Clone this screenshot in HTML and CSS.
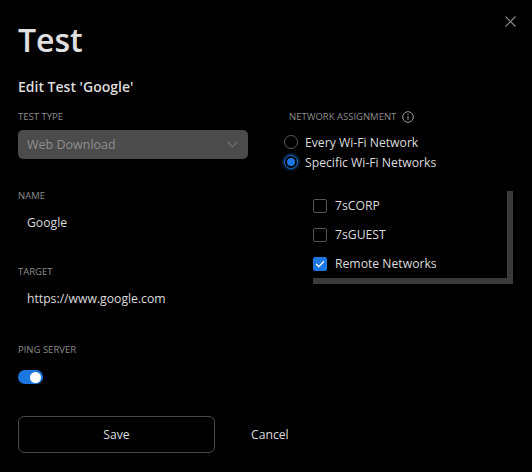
FILE: index.html
```html
<!DOCTYPE html>
<html>

<head>
	<title>Edit Test</title>
	<meta charset="utf-8" />
	<link rel="stylesheet" href="styles.css">
</head>

<body>
	<div class="dialog">
		<button type="button" class="close" aria-label="Close">
			<svg width="11" height="11" viewBox="0 0 11 11"><path d="M0.5 0.5 L10.5 10.5 M10.5 0.5 L0.5 10.5" stroke="#8a8a8a" stroke-width="1.2" fill="none" /></svg>
		</button>
		<h1>Test</h1>
		<h2>Edit Test 'Google'</h2>
		<form class="columns">
			<div class="col-left">
				<p class="label">Test type</p>
				<div class="select">
					<span>Web Download</span>
					<svg width="11" height="7" viewBox="0 0 11 7"><path d="M0.5 0.8 L5.5 5.8 L10.5 0.8" stroke="#777" stroke-width="1.1" fill="none" /></svg>
				</div>
				<p class="label name-label">Name</p>
				<input type="text" class="field" value="Google">
				<p class="label target-label">Target</p>
				<input type="text" class="field" value="https://www.google.com">
				<p class="label ping-label">Ping server</p>
				<span class="toggle"><span class="knob"></span></span>
			</div>
			<div class="col-right">
				<p class="label net-label">Network assignment
					<svg class="info" width="12" height="12" viewBox="0 0 12 12"><circle cx="6" cy="6" r="5.3" stroke="#9a9a9a" stroke-width="1" fill="none" /><path d="M6 5 V9" stroke="#9a9a9a" stroke-width="1" /><circle cx="6" cy="3.4" r="0.6" fill="#9a9a9a" /></svg>
				</p>
				<label class="radio"><span class="dot"></span> Every Wi-Fi Network</label>
				<label class="radio checked"><span class="dot"></span> Specific Wi-Fi Networks</label>
				<div class="networks">
					<label class="check"><span class="box"></span> 7sCORP</label>
					<label class="check"><span class="box"></span> 7sGUEST</label>
					<label class="check checked"><span class="box"><svg width="10" height="8" viewBox="0 0 10 8"><path d="M1 4 L3.8 6.6 L9 1.2" stroke="#fff" stroke-width="1.3" fill="none" /></svg></span> Remote Networks</label>
				</div>
			</div>
		</form>
		<div class="actions">
			<button type="button" class="btn-save">Save</button>
			<button type="button" class="btn-cancel">Cancel</button>
		</div>
	</div>
</body>

</html>
```

FILE: styles.css
```css
/* general styles */
* {
	box-sizing: border-box;
}

body {
	margin: 0;
	background-color: #000;
	font-family: "Open Sans", "Noto Sans", Arial, sans-serif;
	font-size: 12.2px;
	color: #dcdcdc;
}

.dialog {
	position: relative;
	width: 532px;
	height: 472px;
	padding: 18px 18px 0 18px;
}

.close {
	position: absolute;
	top: 15px;
	right: 16px;
	padding: 0;
	border: 0;
	background: none;
	cursor: pointer;
}

h1 {
	margin: 0;
	font-size: 32px;
	font-weight: 600;
	line-height: 44px;
	color: #e0e0e0;
}

h2 {
	margin: 15px 0 0 0;
	font-size: 14px;
	font-weight: 600;
	line-height: 20px;
	color: #dcdcdc;
}

.label {
	margin: 0;
	font-size: 9.5px;
	line-height: 14px;
	text-transform: uppercase;
	color: #8c8c8c;
}

/* columns */
.columns {
	display: grid;
	grid-template-columns: 230px 1fr;
	column-gap: 36px;
	margin-top: 13px;
}

.select {
	display: flex;
	align-items: center;
	justify-content: space-between;
	height: 29px;
	margin-top: 6px;
	padding: 0 10px 0 9px;
	border-radius: 5px;
	background-color: #4b4b4b;
	color: #8e8e8e;
	font-size: 12.5px;
}

.field {
	display: block;
	width: 100%;
	height: 20px;
	margin-top: 9px;
	padding: 0 0 0 9px;
	border: 0;
	background: none;
	font-family: inherit;
	font-size: 12.2px;
	color: #dcdcdc;
}

.name-label {
	margin-top: 30px;
}

.target-label {
	margin-top: 33px;
}

.ping-label {
	margin-top: 35px;
}

.toggle {
	display: flex;
	justify-content: flex-end;
	align-items: center;
	width: 25px;
	height: 14px;
	margin-top: 13px;
	padding: 0 2px;
	border-radius: 7px;
	background-color: #1c78e0;
}

.knob {
	width: 11px;
	height: 11px;
	border-radius: 50%;
	background-color: #fff;
}

/* network assignment */
.net-label {
	display: flex;
	align-items: center;
	gap: 6px;
	margin-left: 5px;
}

.radio {
	display: flex;
	align-items: center;
	gap: 7px;
	height: 20px;
}

.net-label + .radio {
	margin-top: 8px;
}

.radio .dot {
	display: flex;
	justify-content: center;
	align-items: center;
	width: 14px;
	height: 14px;
	border: 1px solid #5a5a5a;
	border-radius: 50%;
}

.radio.checked .dot {
	border-color: #1c78e0;
	box-shadow: 0 0 0 2px rgba(28, 120, 224, 0.25);
}

.radio.checked .dot::after {
	content: "";
	width: 8px;
	height: 8px;
	border-radius: 50%;
	background-color: #1c78e0;
}

.networks {
	width: 200px;
	margin: 19px 0 0 29px;
	border-right: 6px solid #3a3a3a;
	border-bottom: 6px solid #3a3a3a;
}

.check {
	display: flex;
	align-items: center;
	gap: 8px;
	height: 29px;
}

.check .box {
	display: flex;
	justify-content: center;
	align-items: center;
	width: 14px;
	height: 14px;
	border: 1px solid #555;
	border-radius: 2px;
}

.check.checked .box {
	border-color: #1c78e0;
	background-color: #1c78e0;
}

/* buttons */
.actions {
	display: flex;
	align-items: center;
	margin-top: 32px;
}

.actions button {
	font-family: inherit;
	font-size: 12.2px;
	color: #dcdcdc;
	background: none;
	cursor: pointer;
}

.btn-save {
	width: 197px;
	height: 37px;
	border: 1px solid #4a4a4a;
	border-radius: 6px;
}

.btn-cancel {
	margin-left: 22px;
	padding: 0 14px;
	border: 0;
}
```
